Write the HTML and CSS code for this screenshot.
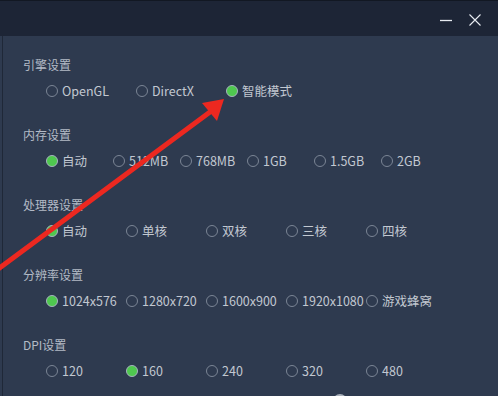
FILE: index.html
```html
<!DOCTYPE html>
<html lang="zh-CN">
<head>
    <meta charset="UTF-8">
    <title>设置</title>
    <link rel="stylesheet" href="styles.css">
</head>
<body>
    <div class="titlebar">
        <div class="win-controls">
            <svg class="win-btn" width="14" height="14" viewBox="0 0 14 14"><path d="M1 7.5H13" stroke="#e8ecf2" stroke-width="1.3"/></svg>
            <svg class="win-btn" width="14" height="14" viewBox="0 0 14 14"><path d="M1.5 1.5L12.5 12.5M12.5 1.5L1.5 12.5" stroke="#e8ecf2" stroke-width="1.1"/></svg>
        </div>
    </div>

    <div class="content">
        <div class="group">
            <div class="group-title">引擎设置</div>
            <div class="opts cols-90">
                <label class="opt"><span class="dot"></span>OpenGL</label>
                <label class="opt"><span class="dot"></span>DirectX</label>
                <label class="opt"><span class="dot on"></span>智能模式</label>
            </div>
        </div>

        <div class="group">
            <div class="group-title">内存设置</div>
            <div class="opts cols-67">
                <label class="opt"><span class="dot on"></span>自动</label>
                <label class="opt"><span class="dot"></span>512MB</label>
                <label class="opt"><span class="dot"></span>768MB</label>
                <label class="opt"><span class="dot"></span>1GB</label>
                <label class="opt"><span class="dot"></span>1.5GB</label>
                <label class="opt"><span class="dot"></span>2GB</label>
            </div>
        </div>

        <div class="group">
            <div class="group-title">处理器设置</div>
            <div class="opts cols-80">
                <label class="opt"><span class="dot on"></span>自动</label>
                <label class="opt"><span class="dot"></span>单核</label>
                <label class="opt"><span class="dot"></span>双核</label>
                <label class="opt"><span class="dot"></span>三核</label>
                <label class="opt"><span class="dot"></span>四核</label>
            </div>
        </div>

        <div class="group">
            <div class="group-title">分辨率设置</div>
            <div class="opts cols-80">
                <label class="opt"><span class="dot on"></span>1024x576</label>
                <label class="opt"><span class="dot"></span>1280x720</label>
                <label class="opt"><span class="dot"></span>1600x900</label>
                <label class="opt"><span class="dot"></span>1920x1080</label>
                <label class="opt"><span class="dot"></span>游戏蜂窝</label>
            </div>
        </div>

        <div class="group">
            <div class="group-title">DPI设置</div>
            <div class="opts cols-80">
                <label class="opt"><span class="dot"></span>120</label>
                <label class="opt"><span class="dot on"></span>160</label>
                <label class="opt"><span class="dot"></span>240</label>
                <label class="opt"><span class="dot"></span>320</label>
                <label class="opt"><span class="dot"></span>480</label>
            </div>
        </div>

        <div class="next-row"><span class="knob"></span></div>
    </div>

    <!-- annotation arrow drawn over the dialog -->
    <svg class="arrow" width="498" height="396" viewBox="0 0 498 396">
        <path d="M-6 272L210 112" stroke="#ec2820" stroke-width="5" stroke-linecap="round"/>
        <polygon points="224,99 202,103 217,121" fill="#ec2820"/>
    </svg>
</body>
</html>
```

FILE: styles.css
```css
html, body {
    margin: 0;
    padding: 0;
}
body {
    width: 498px;
    height: 396px;
    overflow: hidden;
    position: relative;
    background: #2e3a4f;
    font-family: "Noto Sans CJK SC", "Noto Sans", sans-serif;
}
.titlebar {
    height: 35px;
    background: #1d2536;
    border-top: 1px solid #121823;
    display: flex;
    justify-content: flex-end;
    align-items: center;
}
.win-controls {
    display: flex;
    align-items: center;
    gap: 15px;
    margin-right: 16px;
    margin-top: 2px;
}
.content {
    margin-left: 2px;
    border-left: 1px solid #1f2838;
    padding: 21px 0 0 20px;
    height: 339px;
    overflow: hidden;
}
.group {
    height: 70px;
}
.group-title {
    font-size: 12px;
    line-height: 16px;
    height: 16px;
    color: #b3bac6;
}
.opts {
    display: grid;
    margin-top: 10px;
    padding-left: 23px;
}
.cols-90 { grid-template-columns: repeat(3, 90px); }
.cols-67 { grid-template-columns: repeat(6, 67px); }
.cols-80 { grid-template-columns: repeat(5, 80px); }
.opt {
    display: flex;
    align-items: center;
    gap: 4px;
    font-size: 12.5px;
    line-height: 16px;
    height: 16px;
    color: #c2c8d1;
    white-space: nowrap;
}
.dot {
    width: 12px;
    height: 12px;
    box-sizing: border-box;
    border-radius: 50%;
    border: 1px solid #7b8595;
    flex-shrink: 0;
}
.dot.on {
    background: #4fc84f;
    border-color: #a6b2bf;
}
.next-row {
    position: relative;
    height: 10px;
    margin-top: -14px;
}
.knob {
    position: absolute;
    left: 310px;
    top: 1px;
    width: 14px;
    height: 14px;
    border-radius: 50%;
    background: #a9b0ba;
}
.arrow {
    position: absolute;
    top: 0;
    left: 0;
    pointer-events: none;
}
```
